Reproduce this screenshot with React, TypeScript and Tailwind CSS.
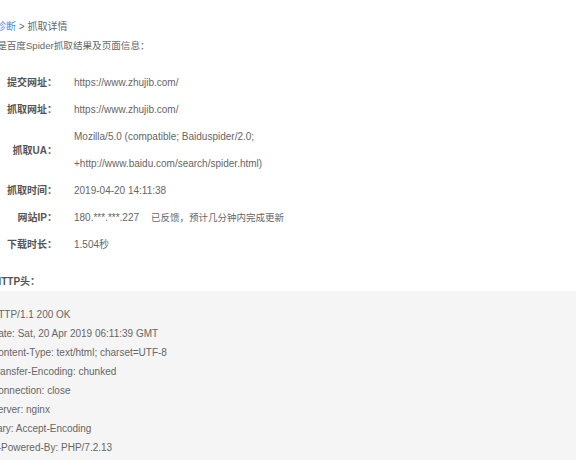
const info: { label: string; value: React.ReactNode }[] = [
  { label: "提交网址：", value: "https://www.zhujib.com/" },
  { label: "抓取网址：", value: "https://www.zhujib.com/" },
  {
    label: "抓取UA：",
    value: (
      <>
        <div>Mozilla/5.0 (compatible; Baiduspider/2.0;</div>
        <div>+http://www.baidu.com/search/spider.html)</div>
      </>
    ),
  },
  { label: "抓取时间：", value: "2019-04-20 14:11:38" },
  {
    label: "网站IP：",
    value: (
      <>
        180.***.***.227
        <span className="ml-[12px] text-[9.5px]">已反馈，预计几分钟内完成更新</span>
      </>
    ),
  },
  { label: "下载时长：", value: "1.504秒" },
];

const headers = [
  "HTTP/1.1 200 OK",
  "Date: Sat, 20 Apr 2019 06:11:39 GMT",
  "Content-Type: text/html; charset=UTF-8",
  "Transfer-Encoding: chunked",
  "Connection: close",
  "Server: nginx",
  "Vary: Accept-Encoding",
  "X-Powered-By: PHP/7.2.13",
];

export default function App() {
  return (
    <div
      className="w-[576px] h-[460px] overflow-hidden bg-white text-[10px] text-[#666]"
      style={{ fontFamily: '"Liberation Sans", "Noto Sans CJK SC", sans-serif' }}
    >
      <div className="pt-[17px] leading-[19px] -ml-[24px]">
        <span className="text-[#4f8ef7]">抓取诊断</span> &gt; 抓取详情
      </div>
      <div className="leading-[19px] -ml-[22px] text-[9.6px]">以下是百度Spider抓取结果及页面信息：</div>

      <table className="mt-[14px] border-collapse">
        <tbody>
          {info.map((row) => (
            <tr key={row.label}>
              <td className="w-[74px] pr-[17px] text-right align-middle font-bold text-[#555] whitespace-nowrap">
                {row.label}
              </td>
              <td className="align-middle leading-[27px] whitespace-nowrap">{row.value}</td>
            </tr>
          ))}
        </tbody>
      </table>

      <div className="mt-[14px] -ml-[6px] leading-[19px] font-bold text-[#555]">HTTP头：</div>
      <div className="bg-[#f5f5f5] pt-[14px] pb-[20px]">
        {headers.map((h) => (
          <div key={h} className="leading-[19px] whitespace-nowrap -ml-[9px]">
            {h}
          </div>
        ))}
      </div>
    </div>
  );
}
